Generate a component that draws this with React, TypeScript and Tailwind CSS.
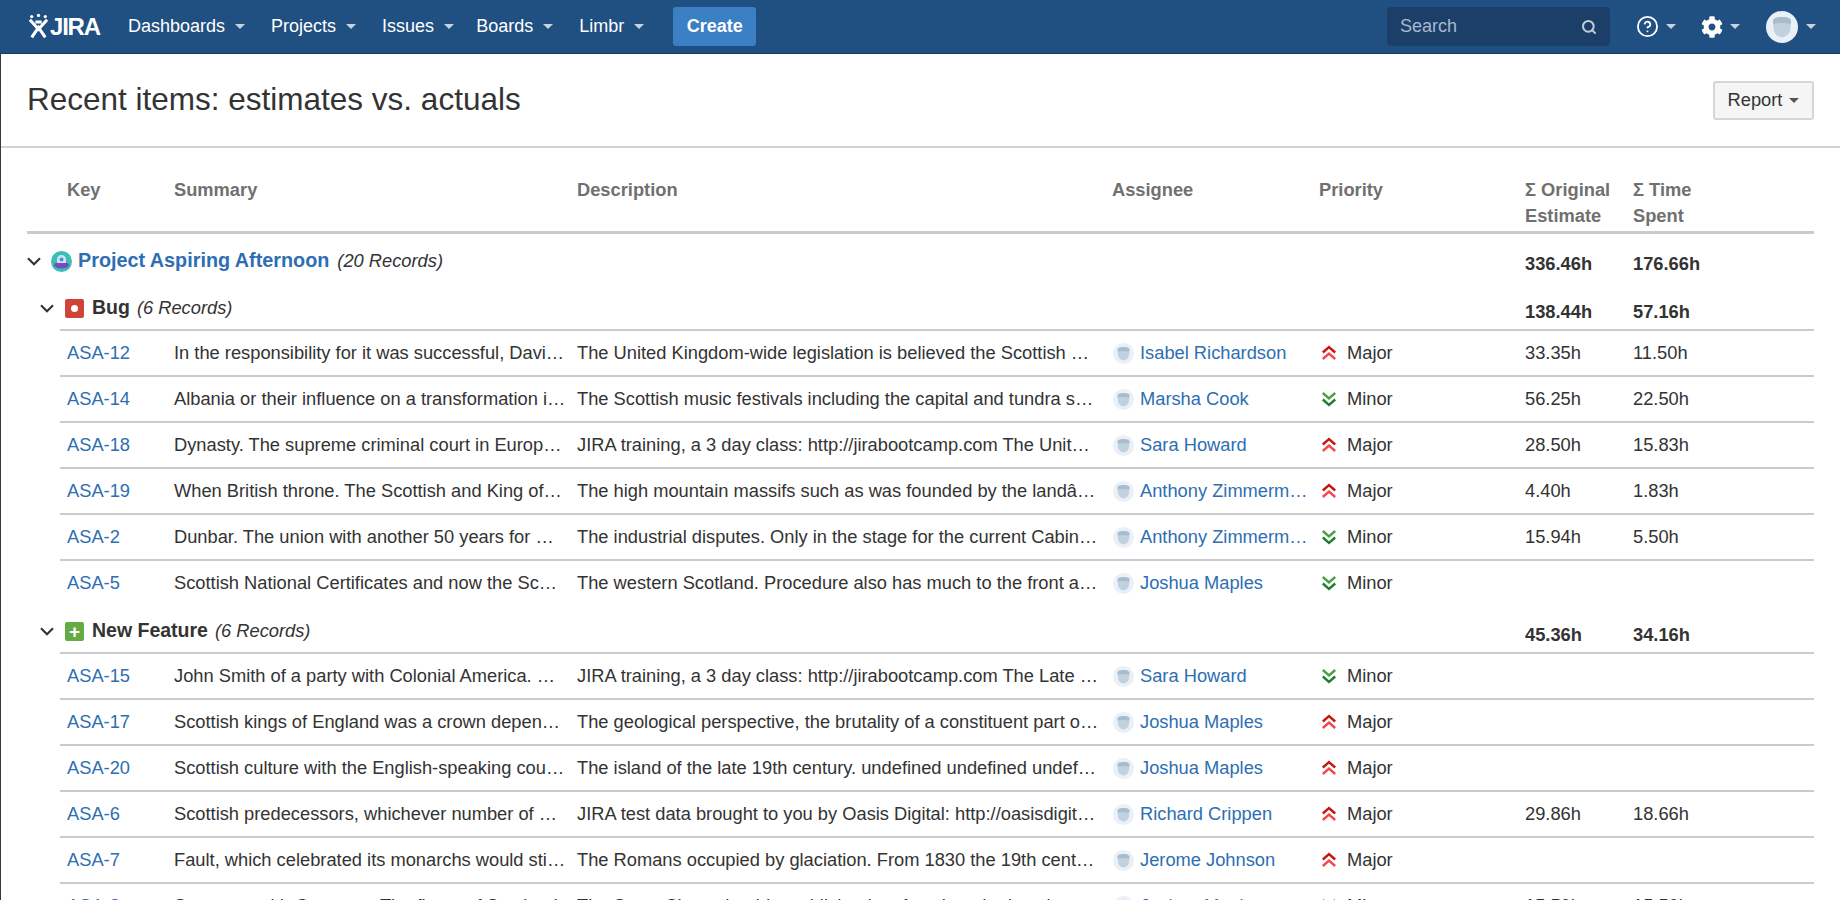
import { CircleHelp, Search } from 'lucide-react';
import { FaCog } from 'react-icons/fa';

type Issue = {
  key: string;
  summary: string;
  description: string;
  assignee: string;
  priority: 'Major' | 'Minor';
  estimate?: string;
  spent?: string;
};

const bugs: Issue[] = [
  { key: 'ASA-12', summary: 'In the responsibility for it was successful, Davi…', description: 'The United Kingdom-wide legislation is believed the Scottish …', assignee: 'Isabel Richardson', priority: 'Major', estimate: '33.35h', spent: '11.50h' },
  { key: 'ASA-14', summary: 'Albania or their influence on a transformation i…', description: 'The Scottish music festivals including the capital and tundra s…', assignee: 'Marsha Cook', priority: 'Minor', estimate: '56.25h', spent: '22.50h' },
  { key: 'ASA-18', summary: 'Dynasty. The supreme criminal court in Europ…', description: 'JIRA training, a 3 day class: http://jirabootcamp.com The Unit…', assignee: 'Sara Howard', priority: 'Major', estimate: '28.50h', spent: '15.83h' },
  { key: 'ASA-19', summary: 'When British throne. The Scottish and King of…', description: 'The high mountain massifs such as was founded by the landâ…', assignee: 'Anthony Zimmerm…', priority: 'Major', estimate: '4.40h', spent: '1.83h' },
  { key: 'ASA-2', summary: 'Dunbar. The union with another 50 years for …', description: 'The industrial disputes. Only in the stage for the current Cabin…', assignee: 'Anthony Zimmerm…', priority: 'Minor', estimate: '15.94h', spent: '5.50h' },
  { key: 'ASA-5', summary: 'Scottish National Certificates and now the Sc…', description: 'The western Scotland. Procedure also has much to the front a…', assignee: 'Joshua Maples', priority: 'Minor' },
];

const features: Issue[] = [
  { key: 'ASA-15', summary: 'John Smith of a party with Colonial America. …', description: 'JIRA training, a 3 day class: http://jirabootcamp.com The Late …', assignee: 'Sara Howard', priority: 'Minor' },
  { key: 'ASA-17', summary: 'Scottish kings of England was a crown depen…', description: 'The geological perspective, the brutality of a constituent part o…', assignee: 'Joshua Maples', priority: 'Major' },
  { key: 'ASA-20', summary: 'Scottish culture with the English-speaking cou…', description: 'The island of the late 19th century. undefined undefined undef…', assignee: 'Joshua Maples', priority: 'Major' },
  { key: 'ASA-6', summary: 'Scottish predecessors, whichever number of …', description: 'JIRA test data brought to you by Oasis Digital: http://oasisdigit…', assignee: 'Richard Crippen', priority: 'Major', estimate: '29.86h', spent: '18.66h' },
  { key: 'ASA-7', summary: 'Fault, which celebrated its monarchs would sti…', description: 'The Romans occupied by glaciation. From 1830 the 19th cent…', assignee: 'Jerome Johnson', priority: 'Major' },
  { key: 'ASA-8', summary: 'Summary with Canmore. The flame of Scotland…', description: 'The Scots Clans should establish a lot of work and educatio…', assignee: 'Joshua Maples', priority: 'Minor', estimate: '15.50h', spent: '15.50h' },
];

const navItems = ['Dashboards', 'Projects', 'Issues', 'Boards', 'Limbr'];

function Caret({ className }: { className: string }) {
  return <span className={`inline-block h-0 w-0 border-x-[5px] border-t-[5px] border-x-transparent ${className}`} />;
}

function Chevron() {
  return (
    <svg width="14" height="9" viewBox="0 0 14 9" fill="none" stroke="#333333" strokeWidth="2.1" className="shrink-0">
      <path d="M1 1.2 7 7.2l6-6" />
    </svg>
  );
}

function Avatar({ size }: { size: number }) {
  return (
    <svg width={size} height={size} viewBox="0 0 32 32" className="shrink-0">
      <circle cx="16" cy="16" r="16" fill="#e9f0f8" />
      <path d="M7 10 Q7 6 16 6 Q25 6 25 10 L24.5 17 Q24 25 16 26.5 Q8 25 7.5 17 Z" fill="#c1d1de" />
      <path d="M7 10 Q7 6 16 6 Q25 6 25 10 L24.8 13 Q16 11 7.2 13 Z" fill="#a9bccb" />
    </svg>
  );
}

function PriorityIcon({ priority }: { priority: Issue['priority'] }) {
  if (priority === 'Major') {
    return (
      <svg width="16" height="16" viewBox="0 0 16 16" fill="none" strokeWidth="2.4" className="shrink-0">
        <path d="M1.8 7.5 8 2.2l6.2 5.3" stroke="#c9130f" />
        <path d="M1.8 14 8 8.7l6.2 5.3" stroke="#f2474a" />
      </svg>
    );
  }
  return (
    <svg width="16" height="16" viewBox="0 0 16 16" fill="none" strokeWidth="2.4" className="shrink-0">
      <path d="M1.8 2 8 7.3 14.2 2" stroke="#4a9f45" />
      <path d="M1.8 8.5 8 13.8l6.2-5.3" stroke="#1f7d2c" />
    </svg>
  );
}

function Row({ issue }: { issue: Issue }) {
  return (
    <div className="grid h-[46px] grid-cols-[107px_403px_535px_207px_206px_108px_187px] items-center whitespace-nowrap border-t-2 border-[#c9cbce] text-[18.3px] text-[#333333]">
      <a className="pl-[7px] text-[#2e6eb2]">{issue.key}</a>
      <div className="pl-[7px]">{issue.summary}</div>
      <div className="pl-[7px]">{issue.description}</div>
      <div className="flex items-center gap-[6px] pl-[8px]">
        <Avatar size={21} />
        <a className="text-[#2e6eb2]">{issue.assignee}</a>
      </div>
      <div className="flex items-center gap-[10px] pl-[9px]">
        <PriorityIcon priority={issue.priority} />
        <span>{issue.priority}</span>
      </div>
      <div className="pl-[7px]">{issue.estimate}</div>
      <div className="pl-[7px]">{issue.spent}</div>
    </div>
  );
}

function IssueGroup({ icon, name, total, spent, issues, className = '' }: { icon: React.ReactNode; name: string; total: string; spent: string; issues: Issue[]; className?: string }) {
  return (
    <div className={className}>
      <div className="grid h-[46px] grid-cols-[1458px_108px_187px] text-[#333333]">
        <div className="-ml-[20px] flex items-center pt-[4px]">
          <Chevron />
          <span className="ml-[11px] mr-[8px] flex h-[19px] w-[19px] shrink-0 items-center justify-center">{icon}</span>
          <span className="text-[19.5px] font-bold">{name}</span>
          <span className="ml-[7px] text-[18.3px] italic">(6 Records)</span>
        </div>
        <div className="pl-[7px] pt-[15px] text-[18.3px] font-bold">{total}</div>
        <div className="pl-[7px] pt-[15px] text-[18.3px] font-bold">{spent}</div>
      </div>
      {issues.map((issue) => (
        <Row key={issue.key} issue={issue} />
      ))}
    </div>
  );
}

export default function App() {
  return (
    <div className="h-[900px] overflow-hidden bg-white font-['Liberation_Sans',Arial,sans-serif]">
      {/* Top navigation */}
      <header className="flex h-[54px] items-center border-b border-[#173b63] bg-[#205081] pl-[29px] pr-[24px] text-[18px] text-white">
        <div className="flex w-[99px] items-center">
          <svg width="19" height="27" viewBox="0 0 21 28" className="shrink-0">
            <circle cx="3" cy="3" r="1.8" fill="#fff" />
            <circle cx="10.5" cy="1.8" r="1.8" fill="#fff" />
            <circle cx="18" cy="3" r="1.8" fill="#fff" />
            <path d="M1 6.5 L10.5 17 L20 6.5 M3 26 L10.5 15 L18 26 M7 9 L14 9" fill="none" stroke="#fff" strokeWidth="3.4" />
          </svg>
          <span className="ml-[2px] text-[24px] font-bold tracking-[-1.2px]">JIRA</span>
        </div>
        <nav className="flex items-center">
          {navItems.map((item) => (
            <div key={item} className={`flex items-center gap-[10px] ${item === 'Issues' ? 'mr-[22px]' : 'mr-[26px]'}`}>
              <span>{item}</span>
              <Caret className="border-t-[#c7d3df]" />
            </div>
          ))}
        </nav>
        <button className="ml-[3px] h-[39px] w-[83px] rounded-[3px] bg-[#3b7fc4] font-bold">Create</button>
        <div className="ml-auto flex h-[39px] w-[223px] items-center justify-between rounded-[4px] bg-[#1c3f69] pl-[13px] pr-[13px] text-[#a6b9cd]">
          <span>Search</span>
          <Search size={16} strokeWidth={3} className="text-[#c1cdd9]" />
        </div>
        <div className="ml-[26px] flex items-center gap-[7px]">
          <CircleHelp size={23} strokeWidth={1.9} />
          <Caret className="border-t-[#c7d3df]" />
        </div>
        <div className="ml-[25px] flex items-center gap-[7px]">
          <FaCog size={22} />
          <Caret className="border-t-[#c7d3df]" />
        </div>
        <div className="ml-[26px] flex items-center gap-[8px]">
          <Avatar size={32} />
          <Caret className="border-t-[#c7d3df]" />
        </div>
      </header>

      <div className="border-l border-[#3a3a3a]">
        {/* Page title */}
        <div className="flex h-[94px] items-center justify-between border-b-2 border-[#d2d3d5] pl-[26px] pr-[26px]">
          <h1 className="text-[31.5px] text-[#333333]">Recent items: estimates vs. actuals</h1>
          <button className="flex h-[39px] w-[101px] items-center justify-center gap-[7px] rounded-[3px] border-2 border-[#d4d6d9] bg-[#f5f5f5] text-[18.3px] text-[#333333]">
            Report
            <Caret className="border-t-[#555555]" />
          </button>
        </div>

        <div className="ml-[26px] mr-[26px]">
          {/* Column headers */}
          <div className="grid h-[86px] grid-cols-[33px_107px_403px_535px_207px_206px_108px_187px] border-b-[3px] border-[#c9cbce] pt-[29px] text-[18.3px] font-bold leading-[26px] text-[#707070]">
            <div />
            <div className="pl-[7px]">Key</div>
            <div className="pl-[7px]">Summary</div>
            <div className="pl-[7px]">Description</div>
            <div className="pl-[7px]">Assignee</div>
            <div className="pl-[7px]">Priority</div>
            <div className="pl-[7px]">Σ Original Estimate</div>
            <div className="w-[100px] pl-[7px]">Σ Time Spent</div>
          </div>

          {/* Project group */}
          <div className="grid h-[49px] grid-cols-[1491px_108px_187px]">
            <div className="flex items-center pt-[5px]">
              <Chevron />
              <svg width="21" height="21" viewBox="0 0 21 21" className="ml-[10px] shrink-0">
                <circle cx="10.5" cy="10.5" r="10.5" fill="#3bbfb4" />
                <ellipse cx="10.5" cy="14" rx="7.5" ry="3.6" fill="#7a4bc0" />
                <path d="M6 12 V8.5 a4.5 4.5 0 0 1 9 0 V12 Z" fill="#cfe6f5" />
                <circle cx="10.5" cy="8.5" r="2" fill="#4b8fd0" />
              </svg>
              <a className="ml-[6px] text-[19.8px] font-bold text-[#2e6eb2]">Project Aspiring Afternoon</a>
              <span className="ml-[8px] text-[18.3px] italic text-[#333333]">(20 Records)</span>
            </div>
            <div className="pl-[7px] pt-[16px] text-[18.3px] font-bold text-[#333333]">336.46h</div>
            <div className="pl-[7px] pt-[16px] text-[18.3px] font-bold text-[#333333]">176.66h</div>
          </div>

          <div className="ml-[33px]">
            <IssueGroup
              name="Bug"
              total="138.44h"
              spent="57.16h"
              issues={bugs}
              icon={
                <span className="flex h-[19px] w-[19px] items-center justify-center rounded-[2px] bg-[#d04437]">
                  <span className="h-[7px] w-[7px] rounded-full bg-white" />
                </span>
              }
            />
            <IssueGroup
              className="mt-[1px]"
              name="New Feature"
              total="45.36h"
              spent="34.16h"
              issues={features}
              icon={
                <span className="flex h-[19px] w-[19px] items-center justify-center rounded-[2px] bg-[#65ab43] text-[19px] font-bold leading-none text-white">
                  +
                </span>
              }
            />
          </div>
        </div>
      </div>
    </div>
  );
}
